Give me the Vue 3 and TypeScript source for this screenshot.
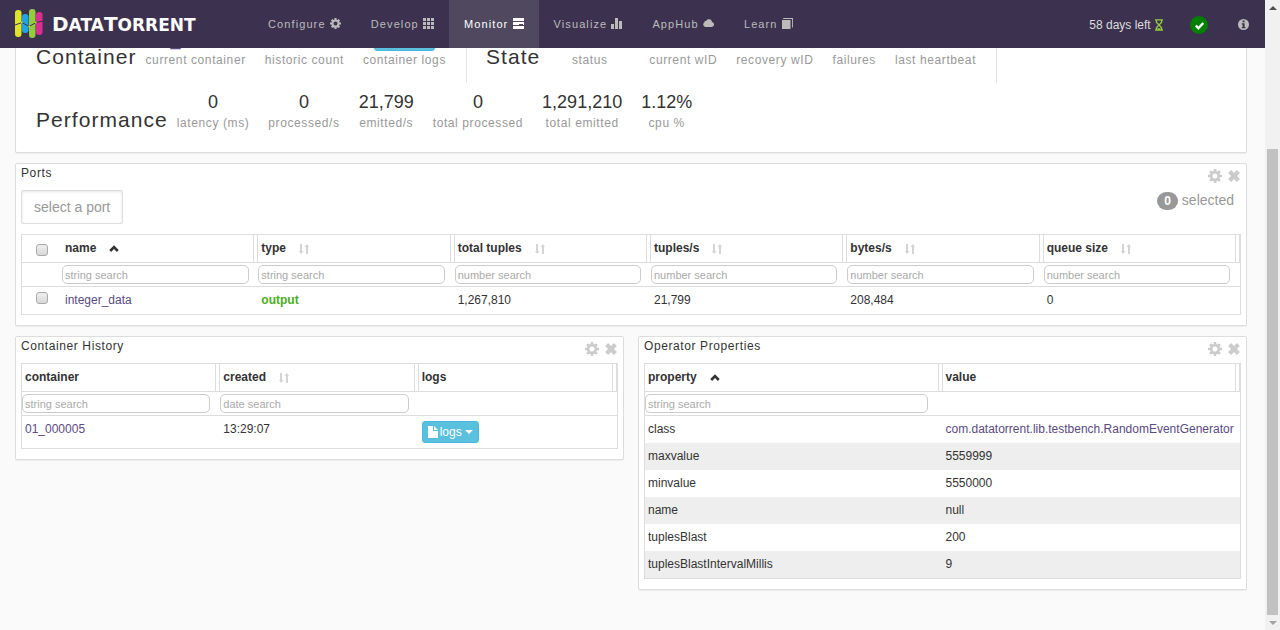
<script setup lang="ts">
import { h, ref } from 'vue'

interface IconShape { box: string; fill?: string; line?: string; width?: number }
interface Stat { label: string; value?: string; kind?: 'link' | 'logs' | 'wide' }
interface Column { label: string; search?: string; sort?: 'asc' | 'none' }

const shapes: Record<string, IconShape> = {
  gear: {
    box: '0 0 14 14',
    line: 'M7 3.1a3.9 3.9 0 1 1 0 7.8a3.9 3.9 0 1 1 0-7.8M7 0v2.5M7 11.5V14M0 7h2.5M11.5 7H14M2.1 2.1l1.7 1.7M10.2 10.2l1.7 1.7M11.9 2.1l-1.7 1.7M3.8 10.2l-1.7 1.7',
    width: 2.7,
  },
  close: { box: '0 0 12 12', line: 'M1.600 1.600L10.400 10.400M10.400 1.600L1.600 10.400', width: 4.3 },
  grid: { box: '0 0 11 11', fill: 'M0 0h3v3H0zM4 0h3v3H4zM8 0h3v3H8zM0 4h3v3H0zM4 4h3v3H4zM8 4h3v3H8zM0 8h3v3H0zM4 8h3v3H4zM8 8h3v3H8z' },
  tasks: { box: '0 0 11 11', fill: 'M0 0h11v3H0zM0 4h6v1h4v1H6v1H0zM6 4h5v3H10V5H6zM0 8h11v3H0z' },
  bars: { box: '0 0 11 11', fill: 'M0 6h3v5H0zM4 0h3v11H4zM8 3h3v8H8z' },
  cloud: { box: '0 0 11 11', fill: 'M2.400 9A2.500 2.500 0 0 1 1.400 4.400A1.700 1.700 0 0 1 3.300 2.700A3.100 3.100 0 0 1 9 3.900A2.600 2.600 0 0 1 8.900 9z' },
  book: { box: '0 0 11 11', fill: 'M0 2h8.5v9H0zM1.5 0H11v9.5h-.9V.9H.7z' },
  hourglass: { box: '0 0 8 12', line: 'M0 .8h8M0 11.2h8M1.4 1v2.2L4 6L1.4 8.800V11M6.600 1v2.200L4 6l2.600 2.800V11M2.500 9.800h3', width: 1.3 },
  check: { box: '0 0 11 11', line: 'M1.800 5.600L4.400 8.200L9.300 3', width: 2.4 },
  info: { box: '0 0 11 11', fill: 'M5.500 0a5.500 5.500 0 1 0 0 11a5.500 5.500 0 1 0 0-11zM4.600 1.600h2v1.700h-2zM3.800 4.200h2.800v3.800h.8v1.200H3.800V8h.8V5.400h-.8z' },
  asc: { box: '0 0 10 10', line: 'M1.200 7L5 3.200L8.800 7', width: 2.6 },
  none: { box: '0 0 10 10', fill: 'M1 0h2v7h1.500L2 10L0 7h1zM7 10h2V3h1L8 0L5.500 3H7z' },
  file: { box: '0 0 10 12', fill: 'M0 0h5v5h5v7H0zM6 0l4 4H6z' },
  caret: { box: '0 0 8 4', fill: 'M0 0h8L4 4z' },
}

const Icon = (props: { name: string }) => {
  const s = shapes[props.name]
  return h('svg', { viewBox: s.box, 'aria-hidden': 'true' }, [
    s.fill ? h('path', { d: s.fill, fill: 'currentColor', 'fill-rule': 'evenodd' }) : null,
    s.line ? h('path', { d: s.line, fill: 'none', stroke: 'currentColor', 'stroke-width': s.width }) : null,
  ])
}
Icon.props = ['name']

const nav = [
  { label: 'Configure', icon: 'gear' },
  { label: 'Develop', icon: 'grid' },
  { label: 'Monitor', icon: 'tasks', active: true },
  { label: 'Visualize', icon: 'bars' },
  { label: 'AppHub', icon: 'cloud' },
  { label: 'Learn', icon: 'book' },
]

const containerStats: Stat[] = [
  { label: 'current container', value: '01_000005', kind: 'link' },
  { label: 'historic count' },
  { label: 'container logs', kind: 'logs' },
]
const stateStats: Stat[] = [
  { label: 'status', kind: 'wide' },
  { label: 'current wID' },
  { label: 'recovery wID' },
  { label: 'failures' },
  { label: 'last heartbeat' },
]
const performanceStats: Stat[] = [
  { label: 'latency (ms)', value: '0' },
  { label: 'processed/s', value: '0' },
  { label: 'emitted/s', value: '21,799' },
  { label: 'total processed', value: '0' },
  { label: 'total emitted', value: '1,291,210' },
  { label: 'cpu %', value: '1.12%' },
]
const overview = [
  [
    { title: 'Container', stats: containerStats, divided: true },
    { title: 'State', stats: stateStats, divided: true },
  ],
  [{ title: 'Performance', stats: performanceStats, divided: false }],
]

const portColumns: Column[] = [
  { label: 'name', search: 'string search', sort: 'asc' },
  { label: 'type', search: 'string search', sort: 'none' },
  { label: 'total tuples', search: 'number search', sort: 'none' },
  { label: 'tuples/s', search: 'number search', sort: 'none' },
  { label: 'bytes/s', search: 'number search', sort: 'none' },
  { label: 'queue size', search: 'number search', sort: 'none' },
]
const historyColumns: Column[] = [
  { label: 'container', search: 'string search' },
  { label: 'created', search: 'date search', sort: 'none' },
  { label: 'logs' },
]
const propertyColumns: Column[] = [
  { label: 'property', search: 'string search', sort: 'asc' },
  { label: 'value' },
]
const properties = [
  { key: 'class', value: 'com.datatorrent.lib.testbench.RandomEventGenerator', link: true },
  { key: 'maxvalue', value: '5559999' },
  { key: 'minvalue', value: '5550000' },
  { key: 'name', value: 'null' },
  { key: 'tuplesBlast', value: '200' },
  { key: 'tuplesBlastIntervalMillis', value: '9' },
]

const portChecked = ref(false)
</script>

<template>
  <div class="app">
    <div class="page">
      <header class="topbar">
        <a class="brand" href="#" aria-label="DataTorrent">
          <svg class="mark" viewBox="0 0 28 30" aria-hidden="true">
            <rect x="0" y="1" width="6.500" height="27" rx="3" fill="#dde52b" />
            <rect x="7" y="5" width="6.500" height="19" rx="3" fill="#1fa4e4" />
            <rect x="14" y="0" width="6.500" height="29" rx="3" fill="#95cc3d" />
            <rect x="21" y="3" width="6.500" height="23" rx="3" fill="#dd2c92" />
            <path d="M0 16L7 13.500L14 17.500L21 13.500L28 12" fill="none" stroke="#3c3250" stroke-width="1" />
            <path d="M6 13.500h1.500M13.300 17.500h1.500M20 13.500h1.500" stroke="#dde52b" stroke-width="1.500" />
          </svg>
          <span class="wordmark">D<small>ATA</small>T<small>ORRENT</small></span>
        </a>
        <nav class="menu">
          <a v-for="item in nav" :key="item.label" href="#" :class="{ active: item.active }">{{ item.label }} <Icon :name="item.icon" class="nav-icon" /></a>
        </nav>
        <div class="status">
          <a class="license" href="#">58 days left <Icon name="hourglass" class="hourglass" /></a>
          <button class="health" type="button" aria-label="System status"><Icon name="check" class="nav-icon" /></button>
          <button class="info" type="button" aria-label="Information"><Icon name="info" class="nav-icon" /></button>
        </div>
      </header>

      <main class="widgets">
        <section class="panel overview">
          <div v-for="(row, i) in overview" :key="i" class="overview-row">
            <div v-for="group in row" :key="group.title" class="group" :class="{ divided: group.divided }">
              <h2>{{ group.title }}</h2>
              <dl class="stats">
                <div v-for="stat in group.stats" :key="stat.label" class="stat" :class="stat.kind">
                  <dt>{{ stat.label }}</dt>
                  <dd>
                    <a v-if="stat.kind === 'link'" href="#">{{ stat.value }}</a>
                    <button v-else-if="stat.kind === 'logs'" class="logs-button" type="button"><Icon name="file" class="file" />logs<Icon name="caret" class="caret" /></button>
                    <template v-else>{{ stat.value }}</template>
                  </dd>
                </div>
              </dl>
            </div>
          </div>
        </section>

        <section class="panel">
          <div class="panel-head">
            <h3>Ports</h3>
            <button type="button" aria-label="Widget settings"><Icon name="gear" class="gear" /></button>
            <button type="button" aria-label="Remove widget"><Icon name="close" class="close" /></button>
          </div>
          <div class="toolbar">
            <button class="select-port" type="button">select a port</button>
            <p class="selected"><span class="badge">0</span> selected</p>
          </div>
          <table>
            <colgroup><col class="tick-col"><col v-for="c in portColumns" :key="c.label"></colgroup>
            <thead>
              <tr class="names">
                <td class="tick"><input type="checkbox" aria-label="Select all ports"></td>
                <th v-for="c in portColumns" :key="c.label" scope="col">
                  <div>{{ c.label }}<Icon v-if="c.sort" :name="c.sort" class="sort" :class="c.sort" /></div>
                </th>
              </tr>
              <tr class="filters">
                <td></td>
                <td v-for="c in portColumns" :key="c.label"><input v-if="c.search" type="text" :placeholder="c.search" :aria-label="'Filter ' + c.label"></td>
              </tr>
            </thead>
            <tbody>
              <tr>
                <td class="tick"><input v-model="portChecked" type="checkbox" aria-label="Select integer_data"></td>
                <td><a href="#">integer_data</a></td>
                <td class="output">output</td>
                <td>1,267,810</td>
                <td>21,799</td>
                <td>208,484</td>
                <td>0</td>
              </tr>
            </tbody>
          </table>
        </section>

        <div class="pair">
          <section class="panel">
            <div class="panel-head">
              <h3>Container History</h3>
              <button type="button" aria-label="Widget settings"><Icon name="gear" class="gear" /></button>
              <button type="button" aria-label="Remove widget"><Icon name="close" class="close" /></button>
            </div>
            <table>
              <thead>
                <tr class="names">
                  <th v-for="c in historyColumns" :key="c.label" scope="col">
                    <div>{{ c.label }}<Icon v-if="c.sort" :name="c.sort" class="sort" :class="c.sort" /></div>
                  </th>
                </tr>
                <tr class="filters">
                  <td v-for="c in historyColumns" :key="c.label"><input v-if="c.search" type="text" :placeholder="c.search" :aria-label="'Filter ' + c.label"></td>
                </tr>
              </thead>
              <tbody>
                <tr>
                  <td><a href="#">01_000005</a></td>
                  <td>13:29:07</td>
                  <td><button class="logs-button" type="button"><Icon name="file" class="file" />logs<Icon name="caret" class="caret" /></button></td>
                </tr>
              </tbody>
            </table>
          </section>

          <section class="panel">
            <div class="panel-head">
              <h3>Operator Properties</h3>
              <button type="button" aria-label="Widget settings"><Icon name="gear" class="gear" /></button>
              <button type="button" aria-label="Remove widget"><Icon name="close" class="close" /></button>
            </div>
            <table class="striped">
              <thead>
                <tr class="names">
                  <th v-for="c in propertyColumns" :key="c.label" scope="col">
                    <div>{{ c.label }}<Icon v-if="c.sort" :name="c.sort" class="sort" :class="c.sort" /></div>
                  </th>
                </tr>
                <tr class="filters">
                  <td v-for="c in propertyColumns" :key="c.label"><input v-if="c.search" type="text" :placeholder="c.search" :aria-label="'Filter ' + c.label"></td>
                </tr>
              </thead>
              <tbody>
                <tr v-for="p in properties" :key="p.key">
                  <td>{{ p.key }}</td>
                  <td><a v-if="p.link" href="#">{{ p.value }}</a><template v-else>{{ p.value }}</template></td>
                </tr>
              </tbody>
            </table>
          </section>
        </div>
      </main>
    </div>

    <div class="scrollbar" aria-hidden="true">
      <span class="arrow up"></span>
      <span class="track"></span>
      <span class="thumb"></span>
      <span class="arrow down"></span>
    </div>
  </div>
</template>

<style>
body {
  margin: 0;
  background: #fafafa;
}
</style>

<style scoped>
.app {
  display: flex;
  align-items: flex-start;
  min-height: 100vh;
  background: #fafafa;
  color: #333;
  font: 12px/17px "Liberation Sans", Arial, sans-serif;
}
.app * {
  box-sizing: border-box;
}
.page {
  flex: 1;
  min-width: 0;
}
a {
  color: #5a4b81;
  text-decoration: none;
}
button {
  padding: 0;
  border: 0;
  background: none;
  color: inherit;
  font: inherit;
  cursor: pointer;
}
h2, h3, p, dl, dd {
  margin: 0;
  font-weight: normal;
}

.topbar {
  display: flex;
  height: 48px;
  background: #3c3250;
}
.brand {
  display: flex;
  align-items: center;
  gap: 9px;
  width: 253px;
  padding-left: 15px;
  color: #fff;
}
.mark {
  width: 28px;
  height: 30px;
}
.wordmark {
  font: bold 20px/20px "DejaVu Sans", sans-serif;
}
.wordmark small {
  font-size: 17px;
}
.menu {
  display: flex;
}
.menu a {
  padding: 0 15px;
  color: #bbb;
  font-size: 11px;
  line-height: 48px;
  letter-spacing: 0.1em;
  white-space: nowrap;
}
.menu a.active {
  background: #4f485f;
  color: #fff;
}
.nav-icon {
  width: 11px;
  height: 11px;
  vertical-align: -1px;
}
.status {
  display: flex;
  align-items: center;
  margin-left: auto;
  padding-right: 16px;
}
.license {
  padding-top: 2px;
  color: #ddd;
}
.hourglass {
  width: 8px;
  height: 12px;
  margin-left: 1px;
  color: #95cc3d;
  vertical-align: -2px;
}
.health {
  display: flex;
  align-items: center;
  justify-content: center;
  width: 18px;
  height: 18px;
  margin: 2px 30px 0 27px;
  border-radius: 50%;
  background: #008000;
  color: #fff;
}
.info {
  display: flex;
  color: #bbb;
}

.widgets {
  display: flex;
  flex-direction: column;
  gap: 10px;
  overflow: hidden;
  padding: 0 18px 40px 15px;
}
.panel {
  min-width: 0;
  padding: 0 5px 10px;
  border: 1px solid #ddd;
  border-radius: 2px;
  background: #fff;
  box-shadow: 0 1px 1px rgba(0, 0, 0, 0.06);
}
.overview {
  margin-top: -48px;
  padding: 19px 0 6px;
}
.overview-row {
  display: flex;
}
.group {
  display: flex;
  align-items: flex-end;
  gap: 9px;
  padding: 7px 20px 14px;
}
.group.divided {
  border-right: 1px solid #e5e5e5;
}
.group + .group {
  padding-left: 19px;
}
h2 {
  font-size: 21px;
  line-height: 25px;
  letter-spacing: 0.05em;
}
.stats {
  display: flex;
  gap: 19px;
}
.stat {
  display: flex;
  flex-direction: column-reverse;
  align-items: center;
}
.stat.wide {
  min-width: 81px;
}
.stat dt {
  color: #999;
  letter-spacing: 0.05em;
}
.stat dd {
  height: 25px;
  font-size: 18px;
  line-height: 25px;
}
.logs-button {
  display: flex;
  align-items: center;
  height: 22px;
  padding: 0 5px;
  border: 1px solid #46b8da;
  border-radius: 3px;
  background: #5bc0de;
  color: #fff;
  font-size: 12px;
}
.stat .logs-button {
  height: 24px;
  padding: 0 7px;
}
.file {
  width: 10px;
  height: 12px;
  margin-right: 2px;
}
.caret {
  width: 8px;
  height: 4px;
  margin-left: 3px;
}

.panel-head {
  display: flex;
  align-items: flex-start;
  gap: 6px;
  height: 26px;
}
.panel-head h3 {
  flex: 1;
  font-size: 12px;
  line-height: 19px;
  letter-spacing: 0.05em;
}
.panel-head button {
  display: flex;
  align-items: center;
  height: 24px;
  color: #ccc;
}
.gear {
  width: 14px;
  height: 14px;
}
.close {
  width: 12px;
  height: 12px;
}
.panel-head button:last-child {
  margin-right: 1px;
}
.toolbar {
  display: flex;
  justify-content: space-between;
  align-items: flex-start;
  padding-bottom: 10px;
  color: #999;
  font-size: 14px;
  line-height: 20px;
}
.select-port {
  height: 34px;
  padding: 0 12px;
  border: 1px solid #ddd;
  border-radius: 2px;
  box-shadow: inset 0 1px 3px rgba(0, 0, 0, 0.1);
}
.selected {
  padding-right: 7px;
}
.badge {
  display: inline-block;
  padding: 0 7px;
  border-radius: 9px;
  background: #999;
  color: #fff;
  font-size: 12px;
  font-weight: bold;
  line-height: 18px;
}

table {
  width: 100%;
  border: 1px solid #ddd;
  border-collapse: separate;
  border-spacing: 0;
  table-layout: fixed;
}
.tick-col {
  width: 40px;
}
th, td {
  padding: 0;
  text-align: left;
  vertical-align: top;
}
.names > * {
  height: 28px;
  border-bottom: 1px solid #ddd;
}
th {
  border-right: 1px solid #ddd;
}
th div {
  display: flex;
  align-items: center;
  height: 27px;
  margin-right: 3px;
  padding-left: 3px;
  border-right: 1px solid #ddd;
}
.sort {
  width: 10px;
  height: 10px;
  margin-left: 13px;
  color: #d4d4d4;
}
.sort.asc {
  color: #333;
}
.filters td {
  height: 24px;
  padding: 2px 0;
  border-bottom: 1px solid #ddd;
}
.filters input {
  display: block;
  width: 95%;
  height: 19px;
  padding: 0 2px;
  border: 1px solid #ccc;
  border-radius: 5px;
  background: #fff;
  font: 11px/17px "Liberation Sans", Arial, sans-serif;
}
.filters input::placeholder {
  color: #aaa;
}
tbody td {
  padding: 5px 3px;
}
.striped tbody tr:nth-child(even) {
  background: #eee;
}
.tick {
  padding-right: 0;
  padding-left: 0;
  text-align: center;
}
.names .tick {
  padding-top: 9px;
}
.tick input {
  display: block;
  width: 12px;
  height: 12px;
  margin: 0 auto;
  border: 1px solid #aaa;
  border-radius: 3px;
  appearance: none;
  background: linear-gradient(#eee, #d8d8d8);
}
.tick input:checked {
  background: #5a4b81;
}
.output {
  color: #4aae20;
  font-weight: bold;
}
.pair {
  display: grid;
  grid-template-columns: 1fr 1fr;
  align-items: start;
  gap: 14px;
}

.scrollbar {
  position: sticky;
  top: 0;
  display: flex;
  flex-direction: column;
  width: 15px;
  height: 100vh;
  padding: 0 2px;
  background: #f1f1f1;
}
.arrow {
  display: flex;
  align-items: center;
  justify-content: center;
  height: 15px;
}
.arrow::before {
  border: 4px solid transparent;
  content: "";
}
.up::before {
  border-top-width: 0;
  border-bottom-color: #505050;
}
.down::before {
  border-bottom-width: 0;
  border-top-color: #a3a3a3;
}
.track {
  flex: 134;
}
.thumb {
  flex: 466;
  background: #c1c1c1;
}
</style>
